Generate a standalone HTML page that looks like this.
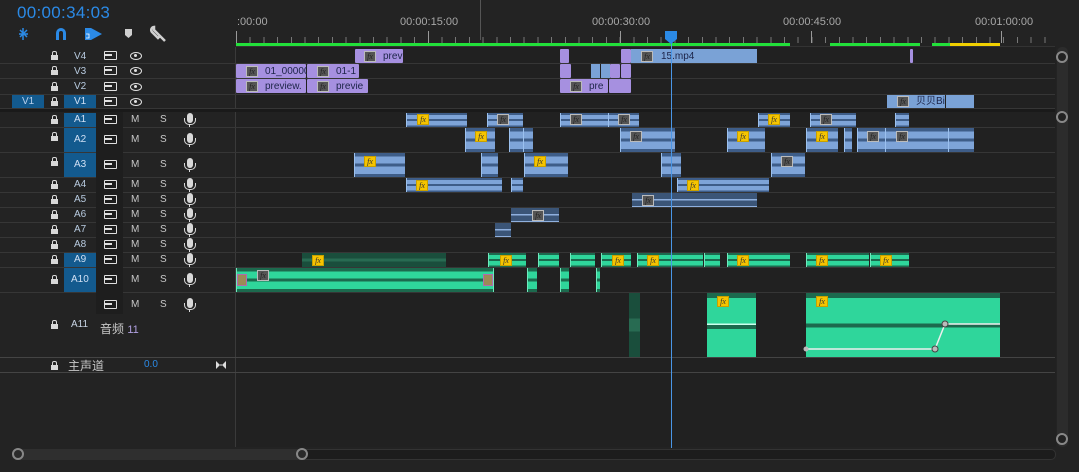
<!DOCTYPE html>
<html><head><meta charset="utf-8"><style>
*{margin:0;padding:0;box-sizing:border-box}
body{width:1079px;height:472px;background:#232323;position:relative;overflow:hidden;font-family:"Liberation Sans","Noto Sans CJK SC",sans-serif;}
div,span{position:absolute}
.ln{height:1px;background:#363636}
.t{font-size:10px;color:#c8c8c8;line-height:12px}
.tb{width:32px;background:#135a8e}
.lk{width:7px;height:5px;background:#d8d8d8;transform:translateY(-2px)}
.lk:before{content:"";position:absolute;left:1px;top:-4px;width:3px;height:4px;border:1px solid #d8d8d8;border-bottom:none;border-radius:2px 2px 0 0}
.tg{width:13px;height:9px;border:1.5px solid #e0e0e0;border-radius:1px}
.tg:after{content:"";position:absolute;left:-1px;top:2px;width:8px;height:1.5px;background:#e0e0e0}
.ey{width:12px;height:8px;border:1.5px solid #e0e0e0;border-radius:50%}
.ey:after{content:"";position:absolute;left:3px;top:1px;width:3px;height:3px;background:#e0e0e0;border-radius:50%}
.mi{width:6px;height:10px;background:#d8d8d8;border-radius:3px}
.mi:after{content:"";position:absolute;left:-3px;top:5px;width:10px;height:6px;border:1px solid #d8d8d8;border-top:none;border-radius:0 0 5px 5px}
.mi:before{content:"";position:absolute;left:2px;top:11px;width:1px;height:3px;background:#d8d8d8}
.p{background:#a690e0;border-radius:1px}
.vb{background:#7aa2d6}
.b{background:linear-gradient(#3e5d88 0 14%,#7ea4d8 14% 44%,#3e5d88 44% 56%,#7ea4d8 56% 88%,#3e5d88 88%);border-left:1px solid #9bc0ee}
.bd{background:linear-gradient(#3b5577 0 48%,#8fb0de 48% 56%,#3b5577 56%);border-bottom:1px solid #8fb0de}
.g{background:linear-gradient(#1c6a4e 0 14%,#2fd69b 14% 44%,#1c6a4e 44% 56%,#2fd69b 56% 88%,#1c6a4e 88%);border-left:1px solid #6fe8bc}
.gd{background:linear-gradient(#1a4e3c 0 40%,#286b52 40% 60%,#1a4e3c 60%)}
.fx{width:12px;height:11px;border:1px solid #bbb;background:#555;font:italic 8px "Liberation Serif",serif;color:#222;text-align:center;line-height:9px}
.fy{width:12px;height:11px;border:1px solid #c8a000;background:#f5c400;font:italic 8px "Liberation Serif",serif;color:#333;text-align:center;line-height:9px}
.cl{font-size:10px;color:#1c2448;line-height:12px}
.rl{font-size:11px;color:#a8a8a8}
</style></head><body>
<div style="left:17px;top:3px;font-size:17px;color:#2b8ae6;letter-spacing:0.3px">00:00:34:03</div>
<svg style="position:absolute;left:18px;top:25px" width="160" height="18">
<g stroke="#2b8ae6" stroke-width="1.5" fill="none"><path d="M5 3v12M1 9h9M2 5l7 7M9 5l-7 7"/></g>
<path d="M38 15v-7a5 5 0 0 1 10 0v7h-3v-7a2 2 0 0 0-4 0v7z" fill="#2b8ae6"/>
<path d="M67 3h6v12h-6z M73 3l11 6-11 6z" fill="#2b8ae6"/><path d="M68 9h3v4h-3" stroke="#fff" stroke-width="0.8" fill="none"/>
<path d="M107 4h7v6l-3.5 3-3.5-3z" fill="#cfcfcf"/>
<path d="M136 5l6 6-2 2-6-6a3 3 0 0 1 2-5z M142 11l5 5" stroke="#cfcfcf" stroke-width="2.5" fill="none"/>
</svg>
<div style="left:480px;top:0;width:1px;height:40px;background:#555"></div>
<div class="rl" style="left:237px;top:16px">:00:00</div>
<div class="rl" style="left:400px;top:16px">00:00:15:00</div>
<div class="rl" style="left:592px;top:16px">00:00:30:00</div>
<div class="rl" style="left:783px;top:16px">00:00:45:00</div>
<div class="rl" style="left:975px;top:16px">00:01:00:00</div>
<div style="left:236px;top:37px;width:819px;height:6px;background:repeating-linear-gradient(90deg,#777 0 1px,transparent 1px 13.7px)"></div>
<div style="left:236px;top:31px;width:1px;height:12px;background:#999"></div>
<div style="left:428px;top:31px;width:1px;height:12px;background:#999"></div>
<div style="left:620px;top:31px;width:1px;height:12px;background:#999"></div>
<div style="left:811px;top:31px;width:1px;height:12px;background:#999"></div>
<div style="left:1001px;top:31px;width:1px;height:12px;background:#999"></div>
<div style="left:236px;top:43px;width:554px;height:3px;background:#22e03a"></div>
<div style="left:830px;top:43px;width:90px;height:3px;background:#22e03a"></div>
<div style="left:932px;top:43px;width:18px;height:3px;background:#22e03a"></div>
<div style="left:950px;top:43px;width:50px;height:3px;background:#f0d000"></div>
<div style="left:236px;top:46px;width:819px;height:1px;background:#333"></div>
<div style="left:235px;top:47px;width:1px;height:400px;background:#3a3a3a"></div>
<div style="left:236px;top:47px;width:820px;height:400px;background:#212121"></div>
<div style="left:0;top:109px;width:1055px;height:3px;background:#1a1a1a"></div>
<div class="ln" style="left:0;top:63px;width:1055px"></div>
<div class="ln" style="left:0;top:78px;width:1055px"></div>
<div class="ln" style="left:0;top:94px;width:1055px"></div>
<div class="ln" style="left:0;top:108px;width:1055px"></div>
<div class="ln" style="left:0;top:127px;width:1055px"></div>
<div class="ln" style="left:0;top:152px;width:1055px"></div>
<div class="ln" style="left:0;top:177px;width:1055px"></div>
<div class="ln" style="left:0;top:192px;width:1055px"></div>
<div class="ln" style="left:0;top:207px;width:1055px"></div>
<div class="ln" style="left:0;top:222px;width:1055px"></div>
<div class="ln" style="left:0;top:237px;width:1055px"></div>
<div class="ln" style="left:0;top:252px;width:1055px"></div>
<div class="ln" style="left:0;top:267px;width:1055px"></div>
<div class="ln" style="left:0;top:292px;width:1055px"></div>
<div class="ln" style="left:0;top:357px;width:1055px;background:#444"></div>
<div class="ln" style="left:0;top:372px;width:1055px;background:#444"></div>
<div style="left:96px;top:112px;width:27px;height:192px;background:#1e1e1e"></div>
<div style="left:96px;top:294px;width:27px;height:20px;background:#1e1e1e"></div>
<div class="tb" style="left:12px;top:95px;height:13px"></div><div class="t" style="left:22px;top:96px;color:#b8d0ec">V1</div>
<div class="tb" style="left:64px;top:95px;height:13px"></div>
<div class="tb" style="left:64px;top:113px;height:14px"></div>
<div class="tb" style="left:64px;top:128px;height:24px"></div>
<div class="tb" style="left:64px;top:153px;height:24px"></div>
<div class="tb" style="left:64px;top:253px;height:14px"></div>
<div class="tb" style="left:64px;top:268px;height:24px"></div>
<div class="lk" style="left:51px;top:57px"></div><div class="t" style="left:74px;top:51px;color:#b8cbe0">V4</div><div class="tg" style="left:104px;top:51px"></div><div class="ey" style="left:130px;top:52px"></div>
<div class="lk" style="left:51px;top:72px"></div><div class="t" style="left:74px;top:66px;color:#b8cbe0">V3</div><div class="tg" style="left:104px;top:66px"></div><div class="ey" style="left:130px;top:67px"></div>
<div class="lk" style="left:51px;top:88px"></div><div class="t" style="left:74px;top:81px;color:#b8cbe0">V2</div><div class="tg" style="left:104px;top:82px"></div><div class="ey" style="left:130px;top:83px"></div>
<div class="lk" style="left:51px;top:103px"></div><div class="t" style="left:74px;top:96px;color:#d0e0f4">V1</div><div class="tg" style="left:104px;top:97px"></div><div class="ey" style="left:130px;top:98px"></div>
<div class="lk" style="left:51px;top:121px"></div><div class="t" style="left:74px;top:114px;color:#d0e0f4">A1</div><div class="tg" style="left:104px;top:115px"></div><div class="t" style="left:131px;top:114px">M</div><div class="t" style="left:160px;top:114px">S</div><div class="mi" style="left:187px;top:113px"></div>
<div class="lk" style="left:51px;top:138px"></div><div class="t" style="left:74px;top:134px;color:#d0e0f4">A2</div><div class="tg" style="left:104px;top:135px"></div><div class="t" style="left:131px;top:134px">M</div><div class="t" style="left:160px;top:134px">S</div><div class="mi" style="left:187px;top:133px"></div>
<div class="lk" style="left:51px;top:163px"></div><div class="t" style="left:74px;top:159px;color:#d0e0f4">A3</div><div class="tg" style="left:104px;top:160px"></div><div class="t" style="left:131px;top:159px">M</div><div class="t" style="left:160px;top:159px">S</div><div class="mi" style="left:187px;top:158px"></div>
<div class="lk" style="left:51px;top:186px"></div><div class="t" style="left:74px;top:179px;color:#b8cbe0">A4</div><div class="tg" style="left:104px;top:180px"></div><div class="t" style="left:131px;top:179px">M</div><div class="t" style="left:160px;top:179px">S</div><div class="mi" style="left:187px;top:178px"></div>
<div class="lk" style="left:51px;top:201px"></div><div class="t" style="left:74px;top:194px;color:#b8cbe0">A5</div><div class="tg" style="left:104px;top:195px"></div><div class="t" style="left:131px;top:194px">M</div><div class="t" style="left:160px;top:194px">S</div><div class="mi" style="left:187px;top:193px"></div>
<div class="lk" style="left:51px;top:216px"></div><div class="t" style="left:74px;top:209px;color:#b8cbe0">A6</div><div class="tg" style="left:104px;top:210px"></div><div class="t" style="left:131px;top:209px">M</div><div class="t" style="left:160px;top:209px">S</div><div class="mi" style="left:187px;top:208px"></div>
<div class="lk" style="left:51px;top:231px"></div><div class="t" style="left:74px;top:224px;color:#b8cbe0">A7</div><div class="tg" style="left:104px;top:225px"></div><div class="t" style="left:131px;top:224px">M</div><div class="t" style="left:160px;top:224px">S</div><div class="mi" style="left:187px;top:223px"></div>
<div class="lk" style="left:51px;top:246px"></div><div class="t" style="left:74px;top:239px;color:#b8cbe0">A8</div><div class="tg" style="left:104px;top:240px"></div><div class="t" style="left:131px;top:239px">M</div><div class="t" style="left:160px;top:239px">S</div><div class="mi" style="left:187px;top:238px"></div>
<div class="lk" style="left:51px;top:261px"></div><div class="t" style="left:74px;top:254px;color:#d0e0f4">A9</div><div class="tg" style="left:104px;top:255px"></div><div class="t" style="left:131px;top:254px">M</div><div class="t" style="left:160px;top:254px">S</div><div class="mi" style="left:187px;top:253px"></div>
<div class="lk" style="left:51px;top:281px"></div><div class="t" style="left:71px;top:274px;color:#d0e0f4">A10</div><div class="tg" style="left:104px;top:275px"></div><div class="t" style="left:131px;top:274px">M</div><div class="t" style="left:160px;top:274px">S</div><div class="mi" style="left:187px;top:273px"></div>
<div class="tg" style="left:104px;top:300px"></div><div class="t" style="left:131px;top:299px">M</div><div class="t" style="left:160px;top:299px">S</div><div class="mi" style="left:187px;top:298px"></div>
<div class="lk" style="left:51px;top:326px"></div><div class="t" style="left:71px;top:319px;color:#c8d4e4">A11</div>
<div style="left:100px;top:320px;font-size:12px;color:#c8c8c8">音频 <span style="position:static;color:#b0a0e0;font-size:11px">11</span></div>
<div class="lk" style="left:51px;top:367px"></div><div style="left:68px;top:357px;font-size:12px;color:#c8c8c8">主声道</div>
<div style="left:144px;top:359px;font-size:10px;color:#2b8ae6">0.0</div>
<svg style="position:absolute;left:215px;top:360px" width="12" height="10"><path d="M1 1l4 4-4 4zM11 1l-4 4 4 4z" fill="#ddd"/><path d="M5 5h2" stroke="#ddd"/></svg>
<div class="p" style="left:355px;top:49px;width:48px;height:14px"></div><div class="fx" style="left:364px;top:51px">fx</div><div class="cl" style="left:383px;top:51px">prev</div>
<div class="p" style="left:560px;top:49px;width:9px;height:14px"></div>
<div class="p" style="left:621px;top:49px;width:10px;height:14px"></div>
<div class="vb" style="left:631px;top:49px;width:126px;height:14px"></div><div class="fx" style="left:641px;top:51px">fx</div><div class="cl" style="left:661px;top:51px">15.mp4</div>
<div class="p" style="left:910px;top:49px;width:3px;height:14px"></div>
<div class="p" style="left:236px;top:64px;width:70px;height:14px"></div><div class="fx" style="left:246px;top:66px">fx</div><div class="cl" style="left:265px;top:66px">01_00000</div>
<div class="p" style="left:307px;top:64px;width:52px;height:14px"></div><div class="fx" style="left:317px;top:66px">fx</div><div class="cl" style="left:336px;top:66px">01-1</div>
<div class="p" style="left:560px;top:64px;width:11px;height:14px"></div>
<div class="vb" style="left:591px;top:64px;width:9px;height:14px"></div><div class="vb" style="left:601px;top:64px;width:9px;height:14px"></div>
<div class="p" style="left:610px;top:64px;width:10px;height:14px"></div><div class="p" style="left:621px;top:64px;width:10px;height:14px"></div>
<div class="p" style="left:236px;top:79px;width:70px;height:14px"></div><div class="fx" style="left:246px;top:81px">fx</div><div class="cl" style="left:265px;top:81px">preview.</div>
<div class="p" style="left:307px;top:79px;width:61px;height:14px"></div><div class="fx" style="left:317px;top:81px">fx</div><div class="cl" style="left:336px;top:81px">previe</div>
<div class="p" style="left:560px;top:79px;width:48px;height:14px"></div><div class="fx" style="left:570px;top:81px">fx</div><div class="cl" style="left:589px;top:81px">pre</div>
<div class="p" style="left:609px;top:79px;width:22px;height:14px"></div>
<div class="vb" style="left:887px;top:95px;width:58px;height:13px"></div><div class="fx" style="left:897px;top:96px">fx</div><div class="cl" style="left:916px;top:96px">贝贝Bi</div>
<div class="vb" style="left:946px;top:95px;width:28px;height:13px"></div>
<div class="b" style="left:406px;top:113px;width:61px;height:14px"></div><div class="fy" style="left:417px;top:114px">fx</div>
<div class="b" style="left:487px;top:113px;width:36px;height:14px"></div><div class="fx" style="left:497px;top:114px">fx</div>
<div class="b" style="left:560px;top:113px;width:48px;height:14px"></div><div class="fx" style="left:570px;top:114px">fx</div>
<div class="b" style="left:608px;top:113px;width:31px;height:14px"></div><div class="fx" style="left:618px;top:114px">fx</div>
<div class="b" style="left:758px;top:113px;width:32px;height:14px"></div><div class="fy" style="left:768px;top:114px">fx</div>
<div class="b" style="left:810px;top:113px;width:46px;height:14px"></div><div class="fx" style="left:820px;top:114px">fx</div>
<div class="b" style="left:895px;top:113px;width:14px;height:14px"></div>
<div class="b" style="left:465px;top:128px;width:30px;height:24px"></div><div class="fy" style="left:475px;top:131px">fx</div>
<div class="b" style="left:509px;top:128px;width:14px;height:24px"></div><div class="b" style="left:523px;top:128px;width:10px;height:24px"></div>
<div class="b" style="left:620px;top:128px;width:55px;height:24px"></div><div class="fx" style="left:630px;top:131px">fx</div>
<div class="b" style="left:727px;top:128px;width:38px;height:24px"></div><div class="fy" style="left:737px;top:131px">fx</div>
<div class="b" style="left:806px;top:128px;width:32px;height:24px"></div><div class="fy" style="left:816px;top:131px">fx</div>
<div class="b" style="left:844px;top:128px;width:8px;height:24px"></div>
<div class="b" style="left:857px;top:128px;width:28px;height:24px"></div><div class="fx" style="left:867px;top:131px">fx</div>
<div class="b" style="left:885px;top:128px;width:63px;height:24px"></div><div class="fx" style="left:896px;top:131px">fx</div>
<div class="b" style="left:948px;top:128px;width:26px;height:24px"></div>
<div class="b" style="left:354px;top:153px;width:51px;height:24px"></div><div class="fy" style="left:364px;top:156px">fx</div>
<div class="b" style="left:481px;top:153px;width:17px;height:24px"></div>
<div class="b" style="left:524px;top:153px;width:44px;height:24px"></div><div class="fy" style="left:534px;top:156px">fx</div>
<div class="b" style="left:661px;top:153px;width:20px;height:24px"></div>
<div class="b" style="left:771px;top:153px;width:34px;height:24px"></div><div class="fx" style="left:781px;top:156px">fx</div>
<div class="b" style="left:406px;top:178px;width:96px;height:14px"></div><div class="fy" style="left:416px;top:180px">fx</div>
<div class="b" style="left:511px;top:178px;width:12px;height:14px"></div>
<div class="b" style="left:677px;top:178px;width:92px;height:14px"></div><div class="fy" style="left:687px;top:180px">fx</div>
<div class="bd" style="left:632px;top:193px;width:125px;height:14px"></div><div class="fx" style="left:642px;top:195px">fx</div>
<div class="bd" style="left:511px;top:208px;width:11px;height:14px"></div><div class="bd" style="left:522px;top:208px;width:37px;height:14px"></div><div class="fx" style="left:532px;top:210px">fx</div>
<div class="bd" style="left:495px;top:223px;width:16px;height:14px"></div>
<div class="gd" style="left:302px;top:253px;width:144px;height:14px"></div><div class="fy" style="left:312px;top:255px">fx</div>
<div class="g" style="left:488px;top:253px;width:38px;height:14px"></div><div class="fy" style="left:500px;top:255px">fx</div>
<div class="g" style="left:538px;top:253px;width:21px;height:14px"></div>
<div class="g" style="left:570px;top:253px;width:25px;height:14px"></div>
<div class="g" style="left:601px;top:253px;width:30px;height:14px"></div><div class="fy" style="left:612px;top:255px">fx</div>
<div class="g" style="left:637px;top:253px;width:66px;height:14px"></div><div class="fy" style="left:647px;top:255px">fx</div>
<div class="g" style="left:704px;top:253px;width:16px;height:14px"></div>
<div class="g" style="left:727px;top:253px;width:63px;height:14px"></div><div class="fy" style="left:737px;top:255px">fx</div>
<div class="g" style="left:806px;top:253px;width:63px;height:14px"></div><div class="fy" style="left:816px;top:255px">fx</div>
<div class="g" style="left:870px;top:253px;width:39px;height:14px"></div><div class="fy" style="left:880px;top:255px">fx</div>
<div class="g" style="left:236px;top:268px;width:258px;height:24px;border-right:1px solid #6fe8bc"></div>
<div style="left:237px;top:274px;width:10px;height:12px;background:#9c8a56;border:1px solid #b06ab0"></div>
<div style="left:483px;top:274px;width:10px;height:12px;background:#9c8a56;border:1px solid #b06ab0"></div>
<div class="fx" style="left:257px;top:270px">fx</div>
<div class="g" style="left:527px;top:268px;width:10px;height:24px"></div>
<div class="g" style="left:560px;top:268px;width:9px;height:24px"></div>
<div class="g" style="left:596px;top:268px;width:4px;height:24px"></div>
<div class="gd" style="left:629px;top:293px;width:11px;height:64px"></div>
<div style="left:707px;top:293px;width:49px;height:64px;background:linear-gradient(#1c6a4e 0 8%,#2fd69b 8% 48%,#cfe 48% 50%,#1c6a4e 50% 56%,#2fd69b 56%)"></div>
<div class="fy" style="left:717px;top:296px">fx</div>
<div style="left:806px;top:293px;width:194px;height:64px;background:linear-gradient(#1c6a4e 0 8%,#2fd69b 8% 48%,#1c6a4e 48% 54%,#2fd69b 54%)"></div>
<div class="fy" style="left:816px;top:296px">fx</div>
<svg style="position:absolute;left:800px;top:315px" width="210" height="42"><path d="M6 34H135L145 9H200" stroke="#eee" stroke-width="1.5" fill="none"/><circle cx="135" cy="34" r="3" fill="#bbb" stroke="#444"/><circle cx="145" cy="9" r="3" fill="#bbb" stroke="#444"/><circle cx="6" cy="34" r="2.5" fill="#bbb"/></svg>
<div style="left:671px;top:40px;width:1px;height:408px;background:#4a96e6"></div>
<svg style="position:absolute;left:665px;top:31px" width="13" height="13"><path d="M0 0h12v8l-6 5-6-5z" fill="#2b8ae6"/></svg>
<div style="left:1057px;top:47px;width:11px;height:400px;background:#2c2c2c;border-radius:5px"></div>
<div style="left:1056px;top:51px;width:12px;height:12px;border:2.5px solid #888;border-radius:50%;background:#222"></div>
<div style="left:1056px;top:111px;width:12px;height:12px;border:2.5px solid #888;border-radius:50%;background:#222"></div>
<div style="left:1056px;top:433px;width:12px;height:12px;border:2.5px solid #888;border-radius:50%;background:#222"></div>
<div style="left:12px;top:449px;width:1044px;height:11px;background:#1c1c1c;border:1px solid #333;border-radius:5px"></div>
<div style="left:12px;top:449px;width:292px;height:11px;background:#2f2f2f;border-radius:5px"></div>
<div style="left:12px;top:448px;width:12px;height:12px;border:2.5px solid #888;border-radius:50%;background:#2a2a2a"></div>
<div style="left:296px;top:448px;width:12px;height:12px;border:2.5px solid #888;border-radius:50%;background:#2a2a2a"></div>
</body></html>
